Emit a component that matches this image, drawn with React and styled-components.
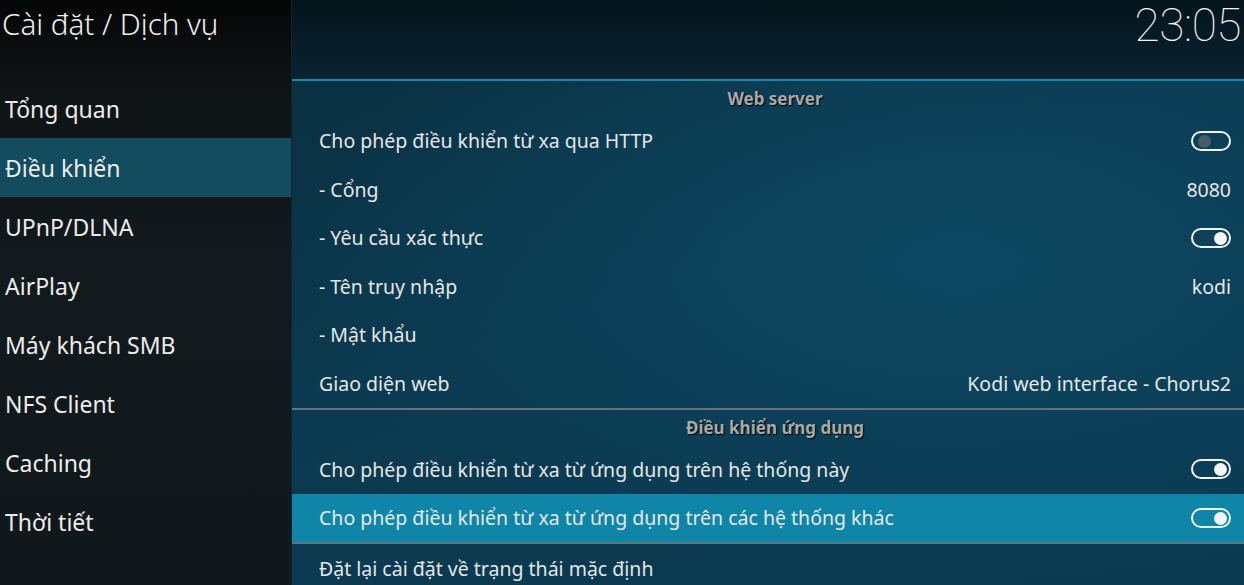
import React from "react";
import styled, { createGlobalStyle } from "styled-components";

const GlobalStyle = createGlobalStyle`
  html, body {
    margin: 0;
    padding: 0;
    background: #0a1014;
    overflow: hidden;
  }
  * {
    box-sizing: border-box;
  }
`;

const Screen = styled.div`
  display: flex;
  width: 1244px;
  height: 585px;
  font-family: "Noto Sans", "Open Sans", sans-serif;
  color: #e8e8e8;
  overflow: hidden;
`;

const Sidebar = styled.aside`
  width: 291px;
  flex-shrink: 0;
  display: flex;
  flex-direction: column;
  background: linear-gradient(180deg, #050606 0%, #0f1315 14%, #121a1d 45%, #11181b 100%);
`;

const Title = styled.h1`
  height: 79px;
  margin: 0;
  padding: 4px 0 0 2px;
  font-size: 29.5px;
  font-weight: 300;
  line-height: 40px;
  color: #eeeeee;
  white-space: nowrap;
`;

const NavList = styled.ul`
  list-style: none;
  margin: 0;
  padding: 0;
`;

const NavItem = styled.li`
  height: 59px;
  display: flex;
  align-items: center;
  padding-left: 5px;
  font-size: 23px;
  color: #ececec;
  background: ${props => (props.active ? "#124c5e" : "transparent")};
`;

const Main = styled.main`
  flex: 1;
  display: flex;
  flex-direction: column;
  background:
    radial-gradient(ellipse at 70% 45%, #0d4761 0%, rgba(13, 71, 97, 0) 70%),
    linear-gradient(160deg, #0a2e3e 0%, #0b3a50 45%, #0a3a52 100%);
  border-left: 1px solid #0a2431;
`;

const TopBar = styled.header`
  height: 81px;
  flex-shrink: 0;
  display: flex;
  justify-content: flex-end;
  align-items: flex-start;
  padding: 2px 3px 0 0;
  background: linear-gradient(180deg, #04141b 0%, #082330 100%);
  border-bottom: 2px solid #1689ae;
`;

const Clock = styled.div`
  font-family: Roboto, "Noto Sans", sans-serif;
  font-weight: 100;
  font-size: 46px;
  line-height: 46px;
  color: #f2f2f2;
  letter-spacing: -0.5px;
`;

const Group = styled.section`
  display: flex;
  flex-direction: column;
  border-bottom: ${props => (props.divider ? "2px solid #62737b" : "none")};
`;

const GroupHeader = styled.div`
  height: 35.5px;
  display: flex;
  align-items: center;
  justify-content: center;
  padding-left: 14px;
  font-size: 17px;
  font-weight: 700;
  color: #a9a9a9;
  text-shadow: 1px 1px 1px #000;
`;

const Row = styled.div`
  height: 48.5px;
  display: flex;
  align-items: center;
  justify-content: space-between;
  padding: 0 13px 0 27px;
  font-size: 19.5px;
  color: #e6e6e6;
  background: ${props => (props.selected ? "#0f86a8" : "transparent")};
`;

const Value = styled.span`
  font-size: 19.5px;
  color: #e6e6e6;
`;

const Toggle = styled.span`
  position: relative;
  display: inline-block;
  width: 40px;
  height: 20px;
  border: 2px solid #f2f2f2;
  border-radius: 10px;
  &:after {
    content: "";
    position: absolute;
    top: 2px;
    left: ${props => (props.on ? "21px" : "5px")};
    width: 13px;
    height: 13px;
    border-radius: 50%;
    background: ${props => (props.on ? "#f4f4f4" : "#4a5b63")};
  }
`;

const navItems = [
  "Tổng quan",
  "Điều khiển",
  "UPnP/DLNA",
  "AirPlay",
  "Máy khách SMB",
  "NFS Client",
  "Caching",
  "Thời tiết",
];

const webServer = [
  { label: "Cho phép điều khiển từ xa qua HTTP", toggle: false },
  { label: "- Cổng", value: "8080" },
  { label: "- Yêu cầu xác thực", toggle: true },
  { label: "- Tên truy nhập", value: "kodi" },
  { label: "- Mật khẩu" },
  { label: "Giao diện web", value: "Kodi web interface - Chorus2" },
];

const appControl = [
  { label: "Cho phép điều khiển từ xa từ ứng dụng trên hệ thống này", toggle: true },
  { label: "Cho phép điều khiển từ xa từ ứng dụng trên các hệ thống khác", toggle: true, selected: true },
];

const SettingRow = ({ item }) => (
  <Row selected={item.selected}>
    <span>{item.label}</span>
    {item.toggle !== undefined && <Toggle on={item.toggle} />}
    {item.value && <Value>{item.value}</Value>}
  </Row>
);

export default function App() {
  return (
    <Screen>
      <GlobalStyle />
      <Sidebar>
        <Title>Cài đặt / Dịch vụ</Title>
        <NavList>
          {navItems.map((name, i) => (
            <NavItem key={name} active={i === 1}>
              {name}
            </NavItem>
          ))}
        </NavList>
      </Sidebar>
      <Main>
        <TopBar>
          <Clock>23:05</Clock>
        </TopBar>
        <Group divider>
          <GroupHeader>Web server</GroupHeader>
          {webServer.map(item => (
            <SettingRow key={item.label} item={item} />
          ))}
        </Group>
        <Group divider>
          <GroupHeader>Điều khiển ứng dụng</GroupHeader>
          {appControl.map(item => (
            <SettingRow key={item.label} item={item} />
          ))}
        </Group>
        <Group>
          <Row>
            <span>Đặt lại cài đặt về trạng thái mặc định</span>
          </Row>
        </Group>
      </Main>
    </Screen>
  );
}
